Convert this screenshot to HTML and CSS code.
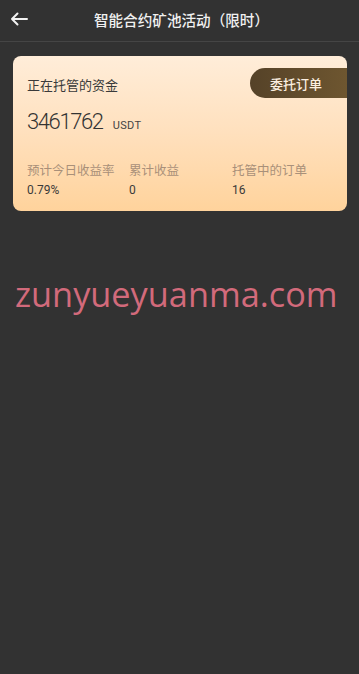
FILE: index.html
```html
<!DOCTYPE html>
<html lang="zh">
<head>
<meta charset="utf-8">
<title>智能合约矿池活动（限时）</title>
<link rel="stylesheet" href="styles.css">
</head>
<body>
<header class="topbar">
  <svg class="back" width="18" height="14" viewBox="0 0 18 14"><path d="M17 7H2M7.5 1.5L2 7l5.5 5.5" fill="none" stroke="#f2f2f2" stroke-width="2" stroke-linecap="round" stroke-linejoin="round"/></svg>
  <h1 class="title">智能合约矿池活动（限时）</h1>
</header>
<main class="content">
  <section class="card">
    <div class="card-head">
      <span class="label">正在托管的资金</span>
      <button class="order-btn">委托订单</button>
    </div>
    <div class="amount"><span class="num">3461762</span><span class="unit">USDT</span></div>
    <div class="stats">
      <div class="stat"><div class="stat-label">预计今日收益率</div><div class="stat-val">0.79%</div></div>
      <div class="stat"><div class="stat-label">累计收益</div><div class="stat-val">0</div></div>
      <div class="stat"><div class="stat-label">托管中的订单</div><div class="stat-val">16</div></div>
    </div>
  </section>
  <div class="watermark">zunyueyuanma.com</div>
</main>
</body>
</html>
```
FILE: styles.css
```css
* { box-sizing: border-box; }
html, body { margin: 0; padding: 0; }
body {
  background: #323232;
  font-family: "Noto Sans CJK SC", "Noto Sans", sans-serif;
  min-height: 674px;
}
.topbar {
  height: 42px;
  border-bottom: 1px solid #454545;
  display: flex;
  align-items: center;
  position: relative;
  padding-left: 10px;
}
.back { display: block; margin-top: -4px; }
.title {
  position: absolute;
  left: 0; right: 0; top: 0;
  margin: 0;
  text-align: center;
  line-height: 40px;
  font-size: 14.6px;
  font-weight: 500;
  color: #f0f0f0;
  padding-left: 4px;
}
.content { padding: 14px 12px 0 13px; }
.card {
  border-radius: 8px;
  background: linear-gradient(180deg, #ffedd9 0%, #ffe0bd 50%, #ffd39c 100%);
  padding: 12px 0 12px 14px;
  height: 155px;
}
.card-head {
  display: flex;
  justify-content: space-between;
  align-items: center;
  height: 30px;
}
.label { font-size: 13px; color: #3a3a3a; margin-top: 2px; }
.order-btn {
  border: 0;
  height: 30px;
  width: 97px;
  border-radius: 15px 0 0 15px;
  background: linear-gradient(90deg, #554228, #6e5630);
  color: #fbefe0;
  font-family: inherit;
  font-size: 13px;
  font-weight: 500;
  padding: 0 5px 0 0;
}
.amount {
  display: flex;
  align-items: baseline;
  margin-top: 11px;
  color: #333;
}
.num {
  font-family: Roboto, sans-serif;
  font-weight: 300;
  font-size: 22px;
  letter-spacing: -1.4px;
}
.unit {
  font-family: Roboto, sans-serif;
  font-size: 11px;
  margin-left: 10px;
  letter-spacing: 0.4px;
  color: #444;
}
.stats {
  display: grid;
  grid-template-columns: 102px 103px 1fr;
  margin-top: 27px;
}
.stat-label { font-size: 12.5px; color: #a99079; line-height: 18px; }
.stat-val {
  font-family: Roboto, sans-serif;
  font-size: 12px;
  color: #3a3a3a;
  margin-top: 4px;
}
.watermark {
  margin-top: 59px;
  padding-left: 2px;
  font-family: "Open Sans", sans-serif;
  font-size: 34.3px;
  color: #d26a7b;
  line-height: 48px;
}
```
